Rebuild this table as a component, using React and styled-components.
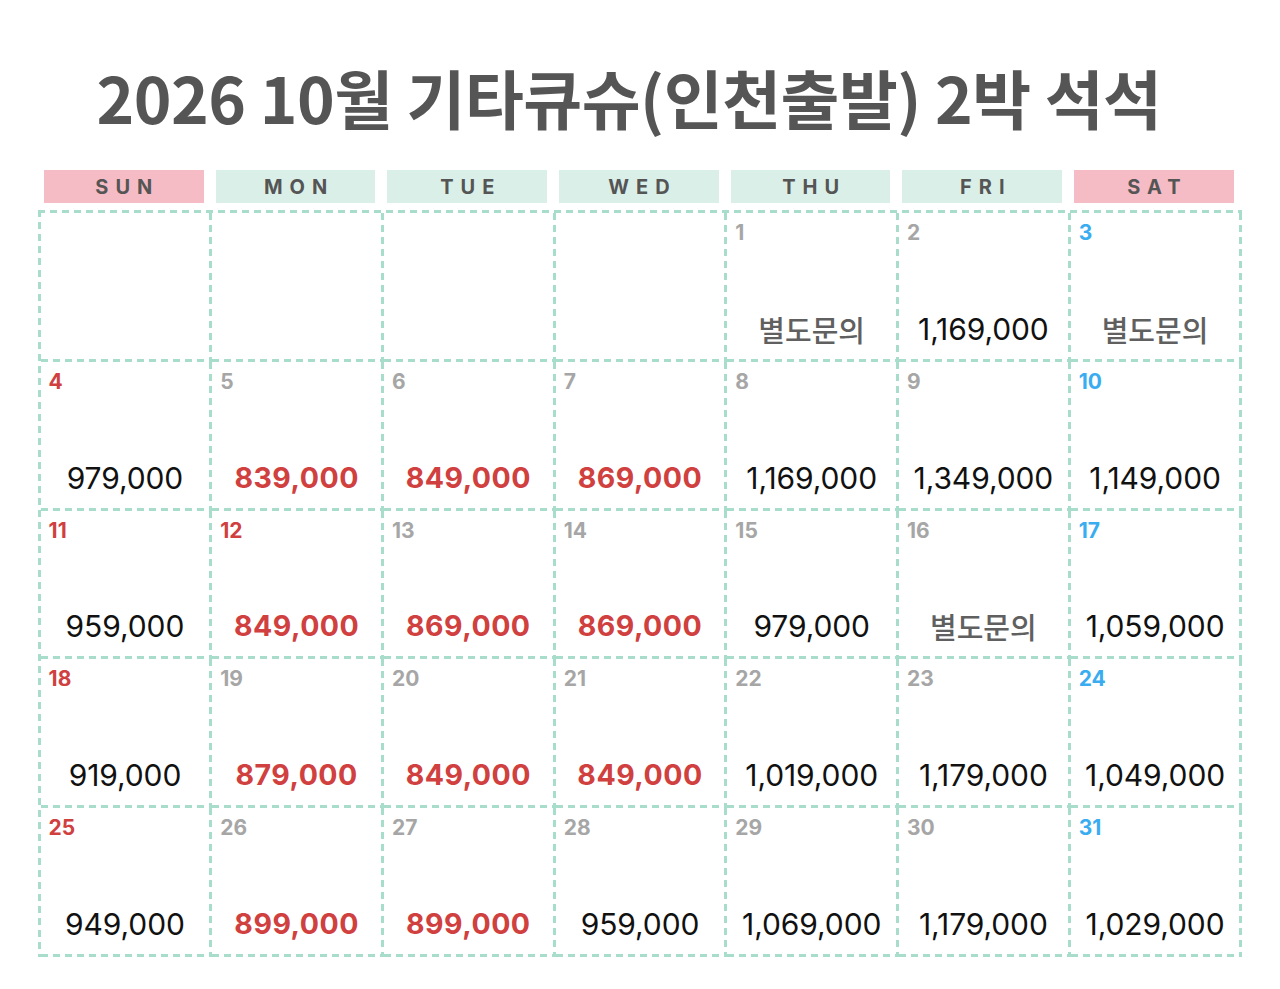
import React from "react";
import styled, { createGlobalStyle } from "styled-components";

const Global = createGlobalStyle`
  html, body { margin: 0; padding: 0; background: #ffffff; }
  body { font-family: "Inter", "Noto Sans CJK KR", sans-serif; }
`;

const DASH = "#a8dccb";

const Page = styled.div`
  width: 1280px;
  height: 989px;
  display: flex;
  flex-direction: column;
  align-items: center;
  background: #fff;
`;

const Title = styled.h1`
  margin: 56px 0 0 -22px;
  font-family: "Noto Sans CJK KR", sans-serif;
  font-weight: 700;
  font-size: 64px;
  line-height: 80px;
  color: #555555;
  letter-spacing: -0.5px;
`;

const HeaderRow = styled.div`
  margin-top: 34px;
  display: grid;
  grid-template-columns: repeat(7, 171.7px);
  width: 1205px;
  padding-left: 1px;
`;

const HeadCell = styled.div`
  margin: 0 6px;
  height: 33px;
  display: flex;
  align-items: center;
  justify-content: center;
  background: ${(p) => (p.$weekend ? "#f6bcc6" : "#daefe8")};
  font-family: "Inter", sans-serif;
  font-weight: 700;
  font-size: 20px;
  letter-spacing: 7px;
  padding-left: 7px;
  color: #555555;
`;

const vDash = `repeating-linear-gradient(to bottom, ${DASH} 0 7px, transparent 7px 12px)`;
const hDash = `repeating-linear-gradient(to right, ${DASH} 0 7px, transparent 7px 12px)`;

const Grid = styled.div`
  margin-top: 7px;
  display: grid;
  grid-template-columns: repeat(7, 171.7px);
  grid-auto-rows: 148.8px;
  padding: 3px 0 0 3px;
  background-image: ${hDash}, ${vDash};
  background-size: 100% 3px, 3px 100%;
  background-position: left top, left top;
  background-repeat: no-repeat;
`;

const Cell = styled.div`
  display: flex;
  flex-direction: column;
  padding: 8px 11px 16px 8px;
  box-sizing: border-box;
  background-image: ${vDash}, ${hDash};
  background-size: 3px 100%, 100% 3px;
  background-position: right top, left bottom;
  background-repeat: no-repeat;
`;

const DayNum = styled.div`
  font-family: "Inter", sans-serif;
  font-weight: 700;
  font-size: 21px;
  line-height: 24px;
  height: 24px;
  color: ${(p) =>
    p.$tone === "red" ? "#d0403f" : p.$tone === "blue" ? "#3aacf0" : "#a6a6a6"};
`;

const Price = styled.div`
  margin-top: auto;
  text-align: center;
  font-family: "Inter", "Noto Sans CJK KR", sans-serif;
  font-size: ${(p) => (p.$sale ? "28.5px" : "30px")};
  line-height: 34px;
  font-weight: ${(p) => (p.$sale ? 700 : 400)};
  color: ${(p) => (p.$sale ? "#d0403f" : "#111111")};
  letter-spacing: ${(p) => (p.$sale ? "0.5px" : "-0.1px")};
`;

const Inquiry = styled.div`
  margin-top: auto;
  text-align: center;
  font-family: "Noto Sans CJK KR", sans-serif;
  font-weight: 500;
  font-size: 29px;
  line-height: 34px;
  color: #606060;
`;

const days = ["SUN", "MON", "TUE", "WED", "THU", "FRI", "SAT"];

const cells = [
  null, null, null, null,
  { d: 1, t: "grey", q: true },
  { d: 2, t: "grey", p: "1,169,000" },
  { d: 3, t: "blue", q: true },
  { d: 4, t: "red", p: "979,000" },
  { d: 5, t: "grey", p: "839,000", s: true },
  { d: 6, t: "grey", p: "849,000", s: true },
  { d: 7, t: "grey", p: "869,000", s: true },
  { d: 8, t: "grey", p: "1,169,000" },
  { d: 9, t: "grey", p: "1,349,000" },
  { d: 10, t: "blue", p: "1,149,000" },
  { d: 11, t: "red", p: "959,000" },
  { d: 12, t: "red", p: "849,000", s: true },
  { d: 13, t: "grey", p: "869,000", s: true },
  { d: 14, t: "grey", p: "869,000", s: true },
  { d: 15, t: "grey", p: "979,000" },
  { d: 16, t: "grey", q: true },
  { d: 17, t: "blue", p: "1,059,000" },
  { d: 18, t: "red", p: "919,000" },
  { d: 19, t: "grey", p: "879,000", s: true },
  { d: 20, t: "grey", p: "849,000", s: true },
  { d: 21, t: "grey", p: "849,000", s: true },
  { d: 22, t: "grey", p: "1,019,000" },
  { d: 23, t: "grey", p: "1,179,000" },
  { d: 24, t: "blue", p: "1,049,000" },
  { d: 25, t: "red", p: "949,000" },
  { d: 26, t: "grey", p: "899,000", s: true },
  { d: 27, t: "grey", p: "899,000", s: true },
  { d: 28, t: "grey", p: "959,000" },
  { d: 29, t: "grey", p: "1,069,000" },
  { d: 30, t: "grey", p: "1,179,000" },
  { d: 31, t: "blue", p: "1,029,000" },
];

export default function App() {
  return (
    <Page>
      <Global />
      <Title>2026 10월 기타큐슈(인천출발) 2박 석석</Title>
      <HeaderRow>
        {days.map((d, i) => (
          <HeadCell key={d} $weekend={i === 0 || i === 6}>
            {d}
          </HeadCell>
        ))}
      </HeaderRow>
      <Grid>
        {cells.map((c, i) => (
          <Cell key={i}>
            {c && (
              <>
                <DayNum $tone={c.t}>{c.d}</DayNum>
                {c.q ? (
                  <Inquiry>별도문의</Inquiry>
                ) : (
                  <Price $sale={c.s}>{c.p}</Price>
                )}
              </>
            )}
          </Cell>
        ))}
      </Grid>
    </Page>
  );
}
